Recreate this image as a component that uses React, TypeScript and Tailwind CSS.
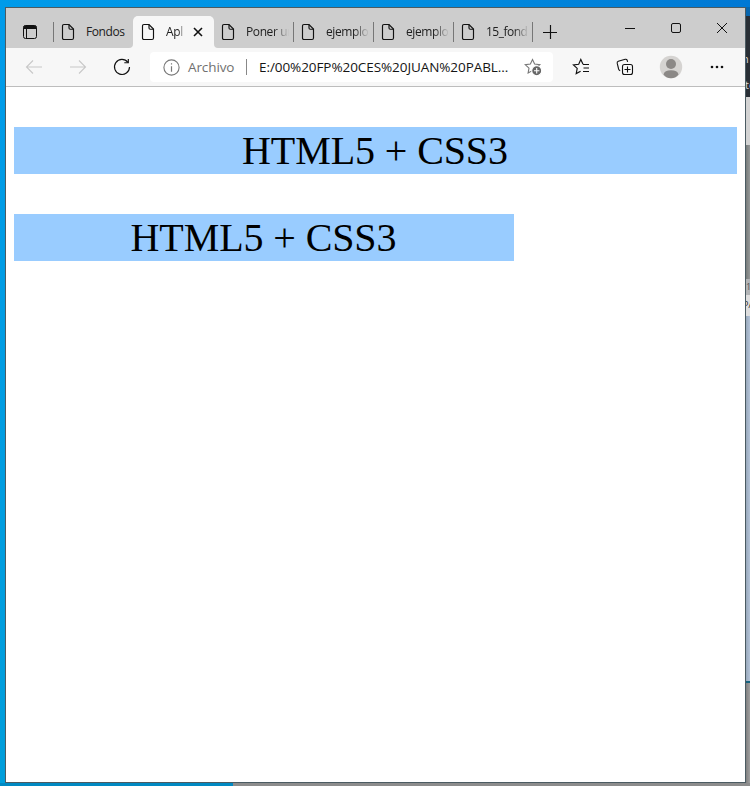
import React from "react";

const FileIcon = () => (
  <svg width="14" height="18" viewBox="0 0 14 18" fill="none" stroke="#111" strokeWidth="1.15" className="shrink-0">
    <path d="M3 1.5H8L12.5 6V15Q12.5 16.5 11 16.5H3Q1.5 16.5 1.5 15V3Q1.5 1.5 3 1.5Z" />
    <path d="M8 1.5V5Q8 6.2 9.2 6.2H12.5" />
  </svg>
);

type TabProps = { title: string; active?: boolean; line?: boolean; text: string };

const Tab = ({ title, active, line, text }: TabProps) => (
  <div
    className={
      "relative flex h-8 w-20 shrink-0 items-center pl-2 " +
      (active ? "rounded-t-[5px] bg-[#f7f7f7] shadow-[1px_0_0_#f7f7f7]" : "")
    }
  >
    {line && <span className="-ml-2 mr-[7px] h-5 w-px shrink-0 bg-[#777]" />}
    <FileIcon />
    <span className={"ml-[11px] overflow-hidden whitespace-nowrap text-[12px] leading-4 text-[#202020] " + text}>
      {title}
    </span>
    {active && (
      <>
        <svg width="10" height="10" viewBox="0 0 10 10" stroke="#111" strokeWidth="1.6" className="ml-[8px] shrink-0">
          <path d="M1 1L9 9M9 1L1 9" />
        </svg>
        <svg width="4" height="4" viewBox="0 0 4 4" fill="#f7f7f7" className="absolute -left-1 bottom-0">
          <path d="M4 0V4H0Q4 4 4 0Z" />
        </svg>
        <svg width="4" height="4" viewBox="0 0 4 4" fill="#f7f7f7" className="absolute -right-[5px] bottom-0">
          <path d="M0 0V4H4Q0 4 0 0Z" />
        </svg>
      </>
    )}
  </div>
);

const FADED = "w-[43px] [mask-image:linear-gradient(to_right,black_65%,transparent)] ";

const TabStrip = () => (
  <div className="flex h-10 shrink-0 items-end bg-[#cdcdcd]">
    <div className="flex h-8 w-[47px] shrink-0 items-center pl-[17px]">
      <svg width="14" height="14" viewBox="0 0 14 14" fill="none" stroke="#111" strokeWidth="1">
        <rect x=".5" y=".5" width="13" height="13" rx="2" />
        <path d="M1 1.5Q1 1 2 1H12Q13 1 13 2V3.5H1Z" fill="#111" />
        <path d="M3.5 4V13" />
      </svg>
    </div>
    <Tab title="Fondos" line text="w-[44px] tracking-[-0.4px]" />
    <Tab title="Apl" active text="w-[19px] tracking-[-0.3px] [mask-image:linear-gradient(to_right,black_65%,transparent)]" />
    <Tab title="Poner un" text={FADED + "tracking-[-0.4px]"} />
    <Tab title="ejemplo" line text={FADED + "tracking-[-0.4px]"} />
    <Tab title="ejemplo" line text={FADED + "tracking-[-0.4px]"} />
    <Tab title="15_fond" line text={FADED + "tracking-[-0.5px]"} />
    <div className="flex h-8 items-center">
      <span className="-ml-px h-5 w-px bg-[#777]" />
      <svg width="14" height="14" viewBox="0 0 14 14" stroke="#111" strokeWidth="1.15" className="ml-[10px]">
        <path d="M0 7.5H14M7.5 0V14" />
      </svg>
    </div>
    <div className="ml-auto flex h-10 items-center gap-[34px] pr-[17px]">
      <svg width="12" height="12" viewBox="0 0 12 12" stroke="#111"><path d="M1 6.5H11" /></svg>
      <svg width="12" height="12" viewBox="0 0 12 12" fill="none" stroke="#111"><rect x="1.5" y="1.5" width="9" height="9" rx="1.5" /></svg>
      <svg width="12" height="12" viewBox="0 0 12 12" stroke="#111"><path d="M1 1L11 11M11 1L1 11" /></svg>
    </div>
  </div>
);

const Toolbar = () => (
  <div className="flex h-[39px] shrink-0 items-center border-b border-[#bdbdbd] bg-[#f7f7f7]">
    <svg width="18" height="16" viewBox="0 0 18 16" fill="none" stroke="#c8c8c8" strokeWidth="1.1" className="ml-[19px]">
      <path d="M17 8H1.5M8 1.5L1.5 8L8 14.5" />
    </svg>
    <svg width="18" height="16" viewBox="0 0 18 16" fill="none" stroke="#c8c8c8" strokeWidth="1.1" className="ml-[26px]">
      <path d="M1 8H16.5M10 1.5L16.5 8L10 14.5" />
    </svg>
    <svg width="18" height="18" viewBox="0 0 18 18" fill="none" stroke="#111" strokeWidth="1.15" className="ml-[26px]">
      <path d="M14.9 4.3A7.5 7.5 0 1 0 16.5 9" />
      <path d="M15.3 1V4.7H11.3" />
    </svg>
    <div className="ml-[19px] flex h-[30px] w-[403px] shrink-0 items-center rounded bg-white">
      <svg width="17" height="17" viewBox="0 0 17 17" fill="none" stroke="#777" strokeWidth="1.1" className="ml-[13px] shrink-0">
        <circle cx="8.5" cy="8.5" r="7.6" />
        <path d="M8.5 7.3V12.7M8.5 4.3V5.6" strokeWidth="1.2" />
      </svg>
      <span className="ml-[8px] w-[58px] shrink-0 whitespace-nowrap text-[13.5px] leading-4 tracking-[-0.1px] text-[#707070]">Archivo</span>
      <span className="h-4 w-px shrink-0 bg-[#888]" />
      <span className="ml-[12px] w-[265px] shrink-0 whitespace-nowrap text-[13.5px] leading-4 tracking-[-0.07px] text-[#151515]">
        E:/00%20FP%20CES%20JUAN%20PABL...
      </span>
      <svg width="18" height="18" viewBox="0 0 18 18" fill="none" stroke="#777" strokeWidth="1.1" className="shrink-0">
        <path d="M8.5 1.5L10.6 6L15.8 6.6L12 10.1L12.9 15L8.5 12.6L4.1 15L5 10.1L1.2 6.6L6.4 6Z" />
        <circle cx="12.7" cy="12.7" r="5" fill="#666" stroke="white" />
        <path d="M10 12.7H15.4M12.7 10V15.4" stroke="white" />
      </svg>
    </div>
    <svg width="18" height="18" viewBox="0 0 18 18" fill="none" stroke="#111" strokeWidth="1.15" className="ml-[19px]">
      <path d="M11 6.3L8.8 1.5L6.7 6.2L1.4 6.9L5.2 10.4L4.2 15.6L8.6 13.2M11 6.5H17M11.5 10H17M11 13.5H17" />
    </svg>
    <svg width="18" height="18" viewBox="0 0 18 18" fill="none" stroke="#111" strokeWidth="1.1" className="ml-[26px]">
      <path d="M4.2 12.7Q3 12.4 2.6 11L1.2 5.2Q.9 3.7 2.3 3.2L9.2 1.3Q10.7 1 11.2 2.3L11.6 3.8" />
      <rect x="6.5" y="6.5" width="10" height="10" rx="2" />
      <path d="M11.5 8.5V14.5M8.5 11.5H14.5" />
    </svg>
    <svg width="24" height="24" viewBox="0 0 24 24" className="ml-[25px]">
      <circle cx="12" cy="12" r="11.2" fill="#d5d3d1" />
      <circle cx="12" cy="9" r="5" fill="#8b8886" />
      <path d="M4.5 19.5Q5.5 15.3 12 15.3T19.5 19.5Q17 23.2 12 23.2T4.5 19.5Z" fill="#8b8886" />
    </svg>
    <svg width="14" height="4" viewBox="0 0 14 4" fill="#111" className="ml-[27px]">
      <circle cx="2" cy="2" r="1.3" /><circle cx="7" cy="2" r="1.3" /><circle cx="12" cy="2" r="1.3" />
    </svg>
  </div>
);

const BackgroundWindows = () => (
  <div className="flex w-1 shrink-0 flex-col overflow-hidden whitespace-nowrap text-[9px] leading-3">
    <div className="h-[9px] shrink-0 bg-[#0866ae]" />
    <div className="h-[81px] shrink-0 overflow-hidden bg-[#292f36] pt-[46px] text-[11px] text-[#ddd]">
      <div className="-ml-[4px] -mt-[9px]">n</div>
      <div className="mt-[14px] -ml-px">to</div>
    </div>
    <div className="h-12 shrink-0 bg-[#d3d3d3]" />
    <div className="h-[134px] shrink-0 bg-gradient-to-r from-[#777b7a] to-[#969999]" />
    <div className="h-4 shrink-0 bg-[#b2b4b6] pt-[2px] text-[#555]">1</div>
    <div className="h-[21px] shrink-0 bg-[#dedede] pt-[4px] text-[#333]"><span className="-ml-[3px]">PA</span></div>
    <div className="h-[365px] shrink-0 bg-gradient-to-r from-[#98a8bb] to-[#b4c4d8]" />
    <div className="h-[2px] shrink-0 bg-[#16647f]" />
    <div className="grow bg-gradient-to-r from-[#7f7f7f] to-[#a0a0a0]" />
  </div>
);

export default function App() {
  return (
    <div className="flex h-[786px] w-[750px] flex-col overflow-hidden bg-[#0099e5] font-['Open_Sans','Noto_Sans',sans-serif]">
      <div className="h-[7px] shrink-0 bg-gradient-to-r from-[#009bea] via-[#008fe2] to-[#0078d4]" />
      <div className="flex h-[776px] shrink-0">
        <div className="w-[5px] shrink-0 bg-gradient-to-b from-[#009bea] to-[#009edb]" />
        <div className="flex w-[741px] shrink-0 flex-col border border-[#4b5b62] bg-white">
          <TabStrip />
          <Toolbar />
          <main className="flex flex-col gap-10 px-2 pt-10 text-center font-['Liberation_Serif',serif] text-[40px] leading-[47px] tracking-[-0.1px] text-black">
            <p className="h-[47px] w-[723px] bg-[#99ccff] pr-px">HTML5 + CSS3</p>
            <p className="h-[47px] w-[500px] bg-[#99ccff] pr-px">HTML5 + CSS3</p>
          </main>
        </div>
        <BackgroundWindows />
      </div>
      <div className="flex h-[3px] shrink-0">
        <div className="w-[233px] bg-[#0089c2]" />
        <div className="grow bg-[#8c8c8c]" />
      </div>
    </div>
  );
}
